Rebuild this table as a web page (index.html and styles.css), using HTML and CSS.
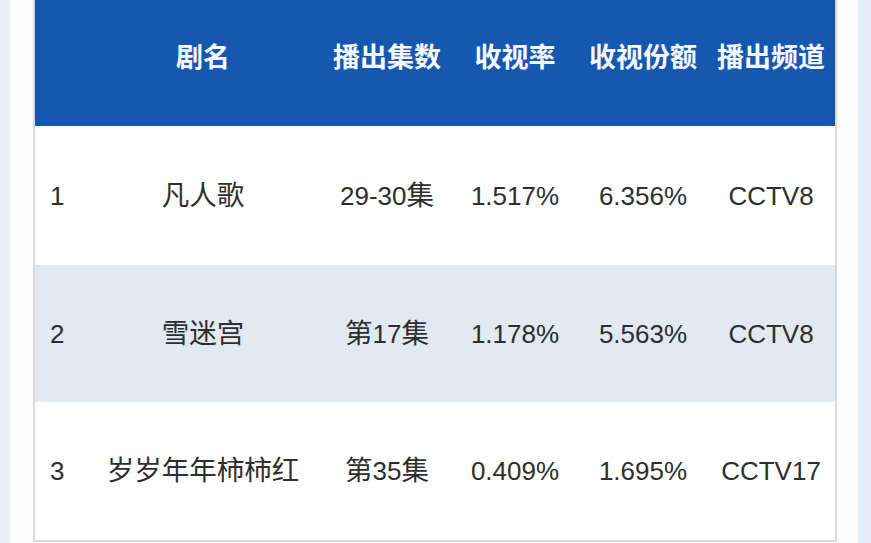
FILE: index.html
```html
<!DOCTYPE html>
<html lang="zh">
<head>
<meta charset="utf-8">
<link rel="stylesheet" href="styles.css">
</head>
<body>
<div class="page">
  <div class="strip-left"></div>
  <div class="gap-left"></div>
  <div class="table">
    <div class="row head">
      <div class="cell num"></div>
      <div class="cell">剧名</div>
      <div class="cell">播出集数</div>
      <div class="cell">收视率</div>
      <div class="cell">收视份额</div>
      <div class="cell">播出频道</div>
    </div>
    <div class="row r1">
      <div class="cell num">1</div>
      <div class="cell"><span class="zh">凡人歌</span></div>
      <div class="cell">29-30<span class="zh">集</span></div>
      <div class="cell">1.517%</div>
      <div class="cell">6.356%</div>
      <div class="cell">CCTV8</div>
    </div>
    <div class="row r2">
      <div class="cell num">2</div>
      <div class="cell"><span class="zh">雪迷宫</span></div>
      <div class="cell"><span class="zh">第</span>17<span class="zh">集</span></div>
      <div class="cell">1.178%</div>
      <div class="cell">5.563%</div>
      <div class="cell">CCTV8</div>
    </div>
    <div class="row r3">
      <div class="cell num">3</div>
      <div class="cell"><span class="zh">岁岁年年柿柿红</span></div>
      <div class="cell"><span class="zh">第</span>35<span class="zh">集</span></div>
      <div class="cell">0.409%</div>
      <div class="cell">1.695%</div>
      <div class="cell">CCTV17</div>
    </div>
  </div>
  <div class="gap-right"></div>
  <div class="strip-right"></div>
</div>
</body>
</html>
```
FILE: styles.css
```css
* { box-sizing: border-box; }
html, body { margin: 0; padding: 0; background: #ffffff; }
body {
  font-family: "Liberation Sans", "Noto Sans CJK SC", sans-serif;
  width: 871px;
  height: 543px;
  overflow: hidden;
}
.page {
  display: flex;
  height: 543px;
  align-items: stretch;
}
.strip-left { width: 10px; background: #e8eff9; }
.gap-left { width: 23px; background: #fdfdfe; }
.gap-right { width: 21px; background: #fdfdfe; }
.strip-right { width: 13px; background: #e6edf9; }
.table {
  width: 804px;
  align-self: flex-start;
  border-left: 2px solid #d9d9d9;
  border-right: 2px solid #d9d9d9;
  border-bottom: 2px solid #dcdcdc;
  display: flex;
  flex-direction: column;
}
.row {
  display: grid;
  grid-template-columns: 48px 240px 128px 128px 128px 128px;
  align-items: center;
  color: #2e2e2e;
  font-size: 26px;
}
.row.head {
  height: 126px;
  background: #1657b0;
  color: #f7f9fd;
  font-size: 27px;
  font-weight: bold;
  font-family: "Noto Sans CJK SC", sans-serif;
  padding-bottom: 15px;
}
.r1 { height: 139px; background: #ffffff; }
.r2 { height: 137px; background: #e2e9f3; }
.r3 { height: 138px; background: #ffffff; }
.cell {
  text-align: center;
  white-space: nowrap;
  line-height: 1;
}
.zh { font-size: 27.5px; }
.cell.num {
  text-align: left;
  padding-left: 15px;
}
```
